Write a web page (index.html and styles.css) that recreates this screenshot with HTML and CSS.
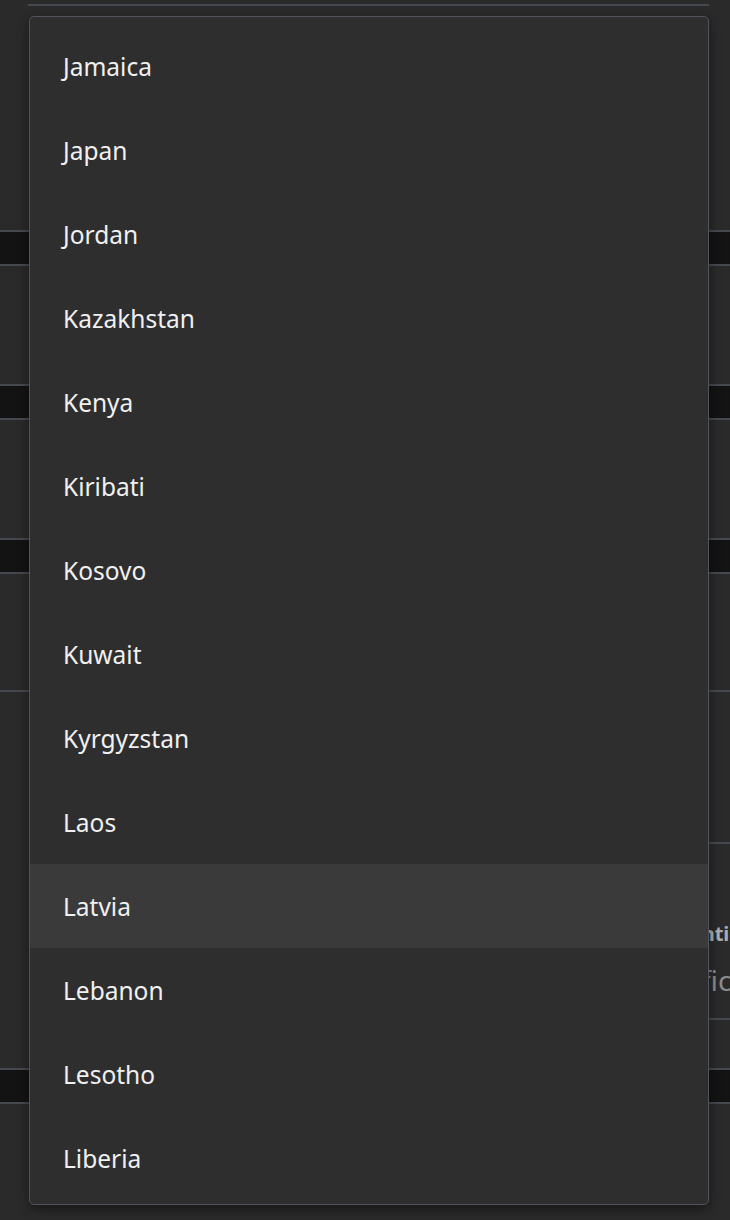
FILE: index.html
```html
<!DOCTYPE html>
<html>
<head>
<meta charset="utf-8">
<link rel="stylesheet" href="styles.css">
</head>
<body>
<div class="page">
  <div class="field-line"></div>
  <div class="section s1"></div>
  <div class="band"></div>
  <div class="section s2"></div>
  <div class="band"></div>
  <div class="section s2"></div>
  <div class="band"></div>
  <div class="section s3">
    <div class="s3-top"></div>
    <div class="s3-body">
      <div class="s3-left"></div>
      <div class="s3-right">
        <div class="sub-top"></div>
        <div class="sub-panel">
          <div class="sub-label">Retention</div>
          <div class="sub-input">Specific</div>
        </div>
      </div>
    </div>
  </div>
  <div class="band"></div>
  <div class="section s4"></div>
</div>

<ul class="menu">
  <li class="item">Jamaica</li>
  <li class="item">Japan</li>
  <li class="item">Jordan</li>
  <li class="item">Kazakhstan</li>
  <li class="item">Kenya</li>
  <li class="item">Kiribati</li>
  <li class="item">Kosovo</li>
  <li class="item">Kuwait</li>
  <li class="item">Kyrgyzstan</li>
  <li class="item">Laos</li>
  <li class="item active">Latvia</li>
  <li class="item">Lebanon</li>
  <li class="item">Lesotho</li>
  <li class="item">Liberia</li>
</ul>
</body>
</html>
```

FILE: styles.css
```css
html, body {
  margin: 0;
  padding: 0;
}
body {
  background: #2a2a2a;
  width: 730px;
  height: 1220px;
  overflow: hidden;
  font-family: "Noto Sans", "Open Sans", sans-serif;
  position: relative;
}
.page {
  display: flex;
  flex-direction: column;
}
.field-line {
  height: 4px;
  margin-left: 28px;
  width: 681px;
  border-bottom: 2px solid #454850;
}
.section {
  background: #2a2a2a;
}
.s1 { height: 224px; }
.s2 { height: 118px; }
.s4 { height: 120px; }
.band {
  height: 32px;
  background: #131313;
  border-top: 2px solid #454850;
  border-bottom: 2px solid #454850;
}
.s3 {
  height: 494px;
  display: flex;
  flex-direction: column;
}
.s3-top {
  height: 116px;
  border-bottom: 2px solid #454850;
}
.s3-body {
  flex: 1;
  display: flex;
}
.s3-left {
  width: 560px;
}
.s3-right {
  flex: 1;
  display: flex;
  flex-direction: column;
  overflow: hidden;
}
.sub-top {
  height: 150px;
  border-bottom: 2px solid #454850;
}
.sub-panel {
  height: 174px;
  border-bottom: 2px solid #454850;
  padding-left: 96px;
  white-space: nowrap;
}
.sub-label {
  margin-top: 76px;
  font-size: 20px;
  font-weight: 700;
  color: #a9adb3;
}
.sub-input {
  margin-top: 14px;
  margin-left: -24px;
  font-size: 28px;
  color: #8c8c8c;
}
.menu {
  position: absolute;
  left: 29px;
  top: 16px;
  width: 678px;
  margin: 0;
  padding: 7px 0 4px;
  list-style: none;
  background: #2e2e2e;
  border: 1px solid #50545c;
  border-radius: 5px;
  box-shadow: 0 4px 12px rgba(0, 0, 0, 0.45);
}
.item {
  height: 84px;
  display: flex;
  align-items: center;
  padding-left: 33px;
  font-size: 24.5px;
  color: #f0f0f0;
}
.item.active {
  background: #3a3a3a;
}
```
